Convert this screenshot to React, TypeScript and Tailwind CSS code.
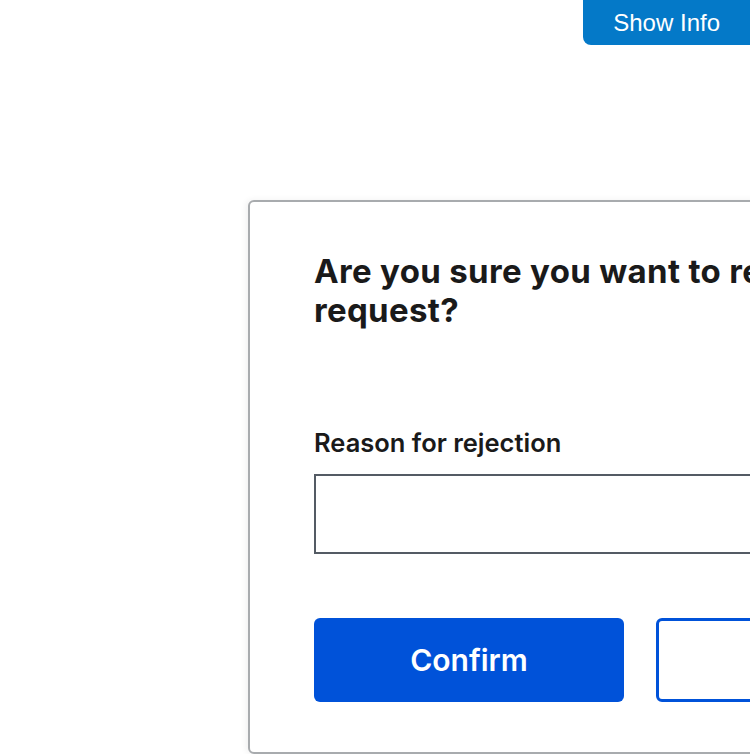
export default function App() {
  return (
    <main className="relative h-[754px] w-[750px] overflow-hidden bg-white">
      <button className="absolute right-0 top-0 h-[45px] rounded-bl-lg bg-[#0479c8] px-[30px] font-['Liberation_Sans',Arial,sans-serif] text-[24px] leading-none text-white">
        Show Info
      </button>

      <div className="ml-[248px] pt-[200px]">
        <div className="w-[720px] h-[554px] rounded-md border-2 border-[#a8abae] bg-white pl-[64px] pr-[40px] pt-[50px] shadow-[-2px_0_6px_rgba(0,0,0,0.06)] font-['Inter',sans-serif] text-[#1a1a1a]">
          <h1 className="whitespace-nowrap text-[33px] font-bold leading-[39px] tracking-[0.01em]">
            Are you sure you want to reject this
            <br />
            request?
          </h1>

          <label className="mt-[98px] block text-[25.5px] font-semibold leading-[30px]">
            Reason for rejection
          </label>
          <input
            type="text"
            className="mt-[16px] block h-[80px] w-[600px] border-2 border-[#545b64] bg-white px-3 outline-none"
          />

          <div className="mt-[64px] flex gap-[32px]">
            <button className="h-[84px] w-[310px] shrink-0 rounded-md bg-[#0052d9] text-[30px] font-semibold text-white">
              Confirm
            </button>
            <button className="h-[84px] w-[310px] shrink-0 rounded-md border-[3px] border-[#0052d9] bg-white text-[30px] font-semibold text-[#0052d9]">
              Cancel
            </button>
          </div>
        </div>
      </div>
    </main>
  );
}
